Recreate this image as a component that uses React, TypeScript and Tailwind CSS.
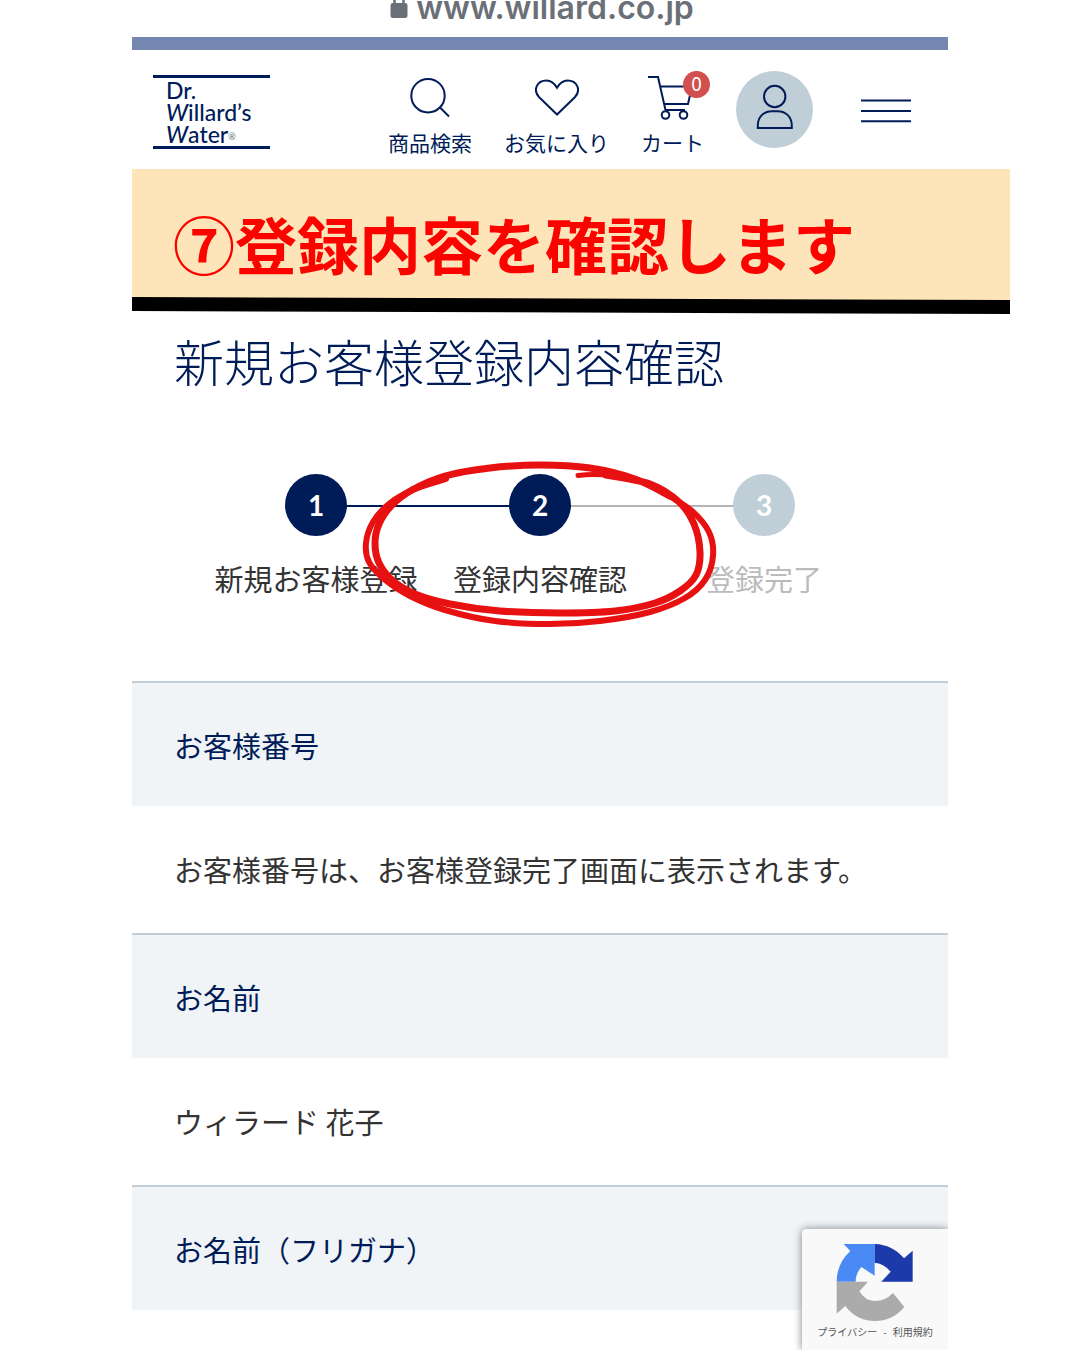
import React from 'react';

const steps = [
  { no: 1, label: '新規お客様登録', done: true },
  { no: 2, label: '登録内容確認', done: true },
  { no: 3, label: '登録完了', done: false },
];

const entries = [
  { term: 'お客様番号', value: 'お客様番号は、お客様登録完了画面に表示されます。' },
  { term: 'お名前', value: 'ウィラード 花子' },
];

type Point = [number, number];

const ringInner: Point[] = [
  [606, 475], [650, 484], [679, 502], [694, 524], [700, 552], [696, 575], [680, 591], [655, 603], [615, 611],
  [560, 613], [500, 611], [450, 604], [415, 594], [393, 581], [379, 563], [375, 543], [379, 524], [391, 506],
  [412, 490], [445, 476], [490, 468], [540, 465], [590, 468], [635, 479], [670, 496],
];

const ringOuter: Point[] = [
  [668, 495], [692, 511], [709, 532], [713, 556], [705, 580], [685, 598], [650, 612], [600, 621], [550, 624],
  [495, 621], [445, 610], [410, 596], [384, 579], [369, 562], [366, 543], [373, 522], [390, 503], [415, 489],
  [446, 479],
];

// Smooth curve through all points (Catmull-Rom to cubic bezier)
const smooth = (pts: Point[]) =>
  pts.slice(1).reduce((d, p, i) => {
    const p0 = pts[Math.max(i - 1, 0)];
    const p1 = pts[i];
    const p3 = pts[Math.min(i + 2, pts.length - 1)];
    const c1 = [p1[0] + (p[0] - p0[0]) / 6, p1[1] + (p[1] - p0[1]) / 6];
    const c2 = [p[0] - (p3[0] - p1[0]) / 6, p[1] - (p3[1] - p1[1]) / 6];
    return `${d} C ${c1} ${c2} ${p}`;
  }, `M ${pts[0]}`);

const Logo: React.FC = () => (
  <a
    href="#"
    className="mt-1 h-[74px] w-[117px] border-y-3 border-[#001c58] pt-px pl-[13px] font-['Lato',sans-serif] text-[23px] leading-[22px] font-medium"
  >
    <span className="block">Dr.</span>
    <span className="block">
      <i>W</i>illard’s
    </span>
    <span className="flex items-end">
      <i>W</i>ater<small className="text-[9px] leading-4 text-gray-500">®</small>
    </span>
  </a>
);

const Header: React.FC = () => (
  <header className="flex h-[119px] items-start justify-between pt-[21px] pr-[37px] pl-[21px] text-[#001c58]">
    <Logo />
    <nav className="flex items-start gap-8 text-[21px] leading-7 whitespace-nowrap">
      <a href="#" className="mt-1 flex flex-col items-center gap-[9px]">
        <svg width="44" height="44" viewBox="0 0 44 44" fill="none" stroke="currentColor" strokeWidth="2">
          <circle cx="20" cy="20.7" r="16.7" />
          <path d="M31.5 32 41 41.5" />
        </svg>
        商品検索
      </a>
      <a href="#" className="mt-1 flex flex-col items-center gap-[9px]">
        <svg width="44" height="44" viewBox="0 0 44 44" fill="none" stroke="currentColor" strokeWidth="2">
          <path d="M22 39.5 4.2 22.3C-2.5 15 2 5.5 11.5 5.5c5 0 8 3 10.5 7.3C24.5 8.5 27.5 5.5 32.5 5.5 42 5.5 46.5 15 39.8 22.3Z" />
        </svg>
        お気に入り
      </a>
      <a href="#" className="relative mt-1 flex flex-col items-center gap-[9px]">
        <svg width="50" height="44" viewBox="0 0 50 44" fill="none" stroke="currentColor" strokeWidth="2" className="overflow-visible">
          <path d="M0 2h10l7.5 33M12 11.5h32l-4 17.5H16M17 35h20" />
          <circle cx="17.5" cy="40" r="3.8" />
          <circle cx="35.5" cy="40" r="3.8" />
        </svg>
        カート
        <span className="absolute -top-1 -right-1.5 size-[27px] rounded-full bg-[#d14f4f] text-center text-[19px] leading-6 text-white">
          0
        </span>
      </a>
      <a href="#" aria-label="マイページ" className="rounded-full bg-[#c0ced7]">
        <svg width="77" height="77" viewBox="0 0 77 77" fill="none" stroke="currentColor" strokeWidth="2">
          <circle cx="38.7" cy="25.5" r="10.7" />
          <path d="M21.8 57V54.5c0-8.5 6-14.3 14-14.3h6c8 0 14 5.8 14 14.3V57Z" />
        </svg>
      </a>
      <button type="button" aria-label="メニュー" className="ml-4 h-[77px]">
        <svg width="50" height="26" viewBox="0 0 50 26" stroke="currentColor" strokeWidth="2">
          <path d="M0 3.5h50M0 14h50M0 24.3h50" />
        </svg>
      </button>
    </nav>
  </header>
);

const Banner: React.FC = () => (
  <div className="-mr-[62px]">
    <p className="bg-[#fee4b9] pt-8 pb-3 pl-[41px] text-[62px] leading-[84px] font-bold whitespace-nowrap text-[#fb0400]">
      ⑦登録内容を確認します
    </p>
    <svg viewBox="0 0 878 17" preserveAspectRatio="none" className="block h-[17px] w-full">
      <path d="M0 0H878V4L0 1Z" fill="#fee4b9" />
      <path d="M0 0 878 3V17L0 14Z" fill="#000" />
    </svg>
  </div>
);

const StepFlow: React.FC = () => (
  <div className="relative mt-20">
    <ol className="flex justify-center">
      {steps.map((step, i) => (
        <li key={step.no} className="relative flex w-56 flex-col items-center">
          {i > 0 && (
            <span
              className={`absolute top-[31px] right-1/2 h-0.5 w-full ${step.done ? 'bg-[#001c58]' : 'bg-[#b5b5b5]'}`}
            />
          )}
          <span
            className={`relative z-10 size-[62px] rounded-full text-center font-['Lato',sans-serif] text-[28px] leading-[62px] font-bold text-white ${step.done ? 'bg-[#001c58]' : 'bg-[#c0ced7]'}`}
          >
            {step.no}
          </span>
          <span
            className={`mt-5 text-[29px] leading-[44px] whitespace-nowrap ${step.done ? 'text-[#333]' : 'text-[#bbb]'}`}
          >
            {step.label}
          </span>
        </li>
      ))}
    </ol>

    {/* Hand-drawn ring around the current step */}
    <svg
      width="360"
      height="172"
      viewBox="360 458 360 172"
      fill="none"
      stroke="#e81111"
      strokeLinecap="round"
      strokeLinejoin="round"
      className="absolute -top-4 left-1/2 z-20 -translate-x-1/2"
    >
      <path d="M578 475.5C590 474 600 474 612 476" strokeWidth="5" />
      <path d={smooth(ringInner)} strokeWidth="7" />
      <path d={smooth(ringOuter)} strokeWidth="6" />
    </svg>
  </div>
);

const Recaptcha: React.FC = () => (
  <aside className="absolute right-0 bottom-0 h-[121px] w-[146px] rounded-tl-sm bg-[#f9f9f9] pt-3.5 text-center shadow-[0_0_8px_gray]">
    <svg width="78" height="79" viewBox="170 98 234 237" className="mx-auto">
      <path d="M286 101H193L213 122Q172 160 172 214H229Q229 190 246 170L286 196Z" fill="#4a8af4" />
      <path d="M286 101Q340 103 374 144L400 121V214H306L334 184Q312 158 286 157Z" fill="#1c3aa9" />
      <path d="M172 214H266L240 243Q258 272 286 272Q318 272 341 248L375 290Q340 332 286 332Q232 332 198 287L172 310Z" fill="#ababab" />
    </svg>
    <p className="flex justify-center gap-1.5 text-[10px] leading-5 whitespace-nowrap text-[#555]">
      <a href="#">プライバシー</a>-<a href="#">利用規約</a>
    </p>
  </aside>
);

export default function App() {
  return (
    <div className="h-screen overflow-hidden bg-white px-[132px] font-['Noto_Sans_CJK_JP',sans-serif]">
      <div className="flex h-full flex-col">
        <div className="flex h-[37px] shrink-0 items-start justify-center gap-2 pl-1 font-['Inter',sans-serif] text-[32px] leading-10 font-semibold text-[#6b7078]">
          <svg width="18" height="20" viewBox="0 0 18 20" className="shrink-0">
            <path d="M4.5 6V-2M13.5 6V-2" stroke="currentColor" strokeWidth="2.5" />
            <rect x="0.5" y="3" width="17" height="15" rx="2.5" fill="currentColor" />
          </svg>
          <span className="-mt-3">www.willard.co.jp</span>
        </div>
        <div className="h-[13px] shrink-0 bg-[#7387b1]" />
        <Header />
        <Banner />

        <main className="relative min-h-0 flex-1 overflow-hidden">
          <h1 className="mt-3 pl-[42px] text-[50px] leading-[68px] font-light text-[#001c58]">新規お客様登録内容確認</h1>
          <StepFlow />
          <dl className="mt-[81px] text-[29px] leading-[44px] text-[#333]">
            {entries.map((entry) => (
              <React.Fragment key={entry.term}>
                <dt className="border-t-2 border-[#c0ced7] bg-[#f0f4f7] px-[42px] pt-10 pb-[39px] text-[#001c58]">{entry.term}</dt>
                <dd className="px-[42px] pt-[41px] pb-[42px] whitespace-nowrap">{entry.value}</dd>
              </React.Fragment>
            ))}
            <dt className="border-t-2 border-[#c0ced7] bg-[#f0f4f7] px-[42px] pt-10 pb-[39px] text-[#001c58]">お名前（フリガナ）</dt>
          </dl>
          <Recaptcha />
        </main>
      </div>
    </div>
  );
}
